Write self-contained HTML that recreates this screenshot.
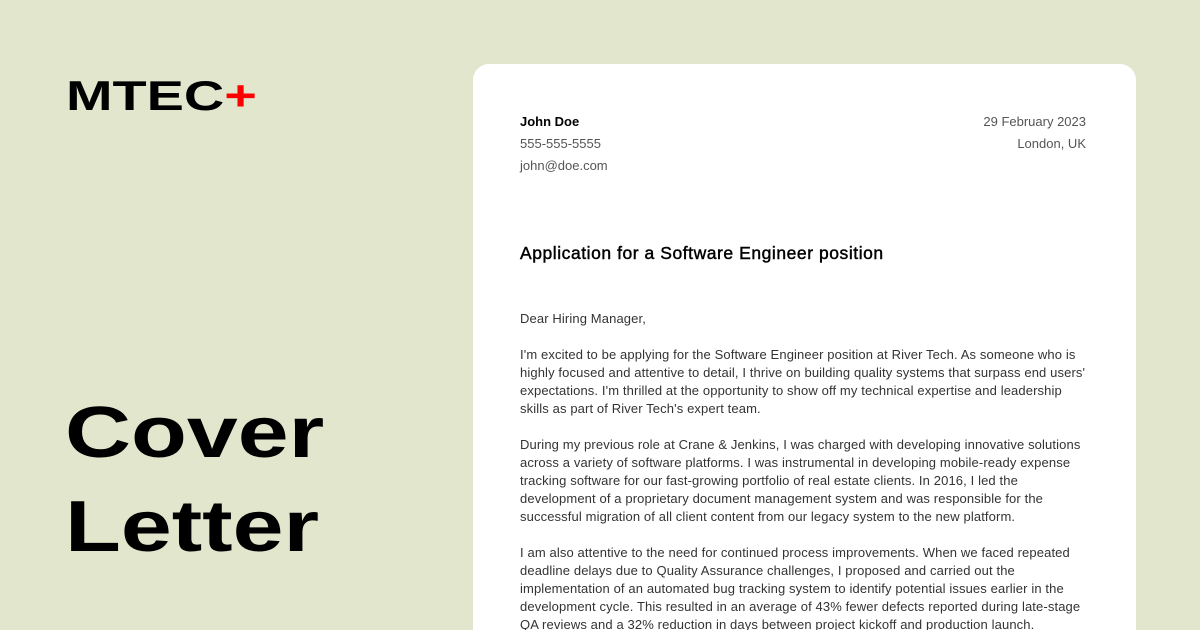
<!DOCTYPE html>
<html><head><style>
html,body{margin:0;width:1200px;height:630px;overflow:hidden}
body{background:#e1e6cd;position:relative;font-family:"Liberation Sans",sans-serif}
.logo{position:absolute;left:66px;top:74px;font-size:42px;font-weight:bold;transform:scaleX(1.33);transform-origin:left top;color:#000;line-height:44px}
.logo span{color:#f00}
.big{position:absolute;left:65px;top:386px;font-size:72px;font-weight:bold;line-height:94px;transform:scaleX(1.27);transform-origin:left top;color:#000}
.card{position:absolute;left:473px;top:64px;width:663px;height:566px;background:#fff;border-radius:16px 16px 0 0}
.in{position:absolute;left:47px;right:50px;top:47px;font-size:13px;color:#333;line-height:22px}
.r{position:absolute;right:0;top:0;text-align:right;color:#555}
h1{font-size:17.5px;letter-spacing:.55px;font-weight:normal;color:#000;margin:0;position:absolute;top:131px;left:0;-webkit-text-stroke:0.45px #000;white-space:nowrap}
.body{position:absolute;top:199px;left:0;right:-20px;line-height:18px;letter-spacing:.12px;white-space:nowrap}
p{margin:0 0 18px}
</style></head><body>
<div class="logo">MTEC<span>+</span></div>
<div class="big">Cover<br>Letter</div>
<div class="card"><div class="in">
<div><b style="color:#000">John Doe</b><br><span style="color:#555">555-555-5555<br>john@doe.com</span></div>
<div class="r">29 February 2023<br>London, UK</div>
<h1>Application for a Software Engineer position</h1>
<div class="body">
<p>Dear Hiring Manager,</p>
<p>I'm excited to be applying for the Software Engineer position at River Tech. As someone who is<br>highly focused and attentive to detail, I thrive on building quality systems that surpass end users'<br>expectations. I'm thrilled at the opportunity to show off my technical expertise and leadership<br>skills as part of River Tech's expert team.</p>
<p>During my previous role at Crane &amp; Jenkins, I was charged with developing innovative solutions<br>across a variety of software platforms. I was instrumental in developing mobile-ready expense<br>tracking software for our fast-growing portfolio of real estate clients. In 2016, I led the<br>development of a proprietary document management system and was responsible for the<br>successful migration of all client content from our legacy system to the new platform.</p>
<p>I am also attentive to the need for continued process improvements. When we faced repeated<br>deadline delays due to Quality Assurance challenges, I proposed and carried out the<br>implementation of an automated bug tracking system to identify potential issues earlier in the<br>development cycle. This resulted in an average of 43% fewer defects reported during late-stage<br>QA reviews and a 32% reduction in days between project kickoff and production launch.</p>
</div></div></div>
</body></html>
